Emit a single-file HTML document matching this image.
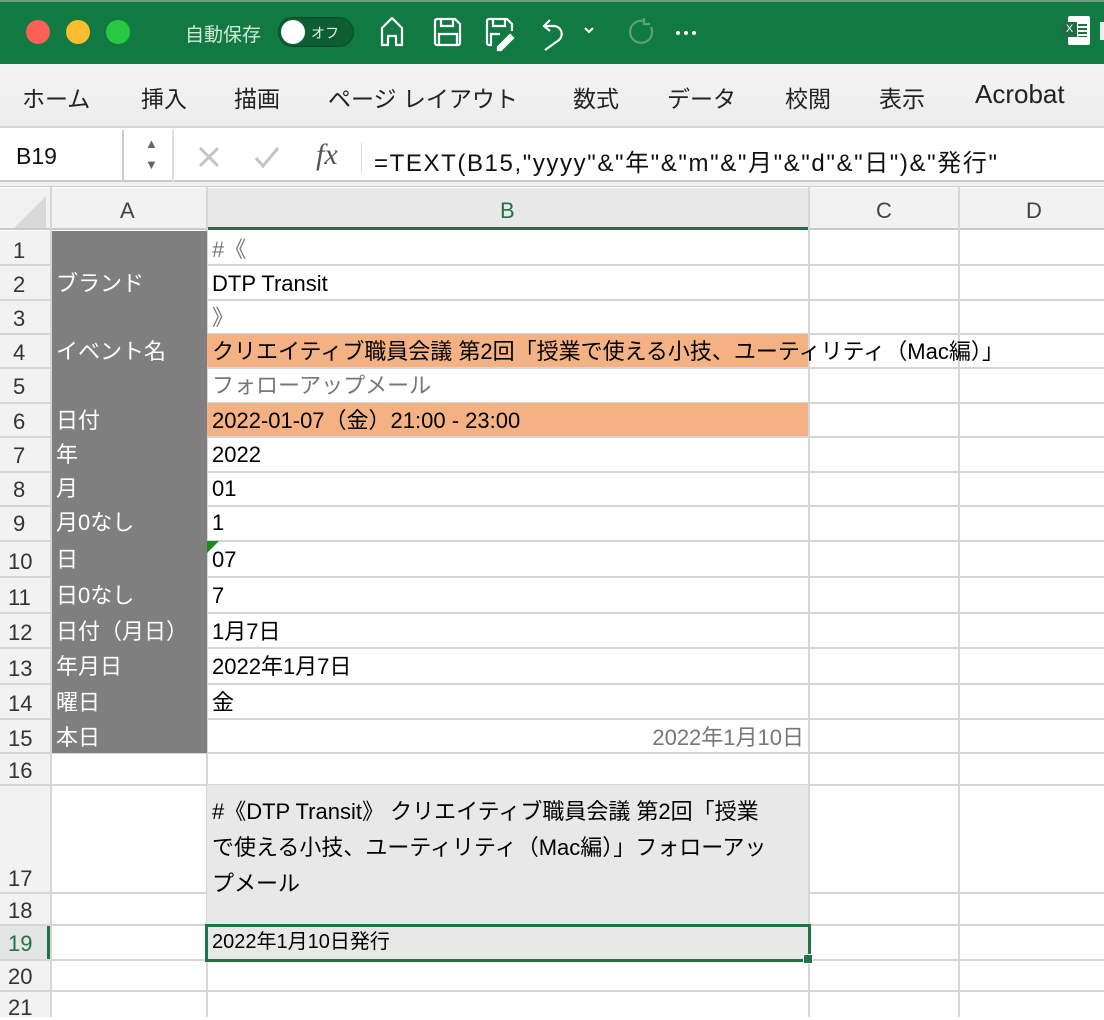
<!DOCTYPE html>
<html><head><meta charset="utf-8"><style>
*{margin:0;padding:0;box-sizing:border-box}
body{width:1104px;height:1017px;overflow:hidden;background:#fff;font-family:"Liberation Sans","Noto Sans CJK JP",sans-serif;position:relative}
.a{position:absolute}
.t{position:absolute;white-space:nowrap}
.cell{position:absolute;font-size:22px;color:#000;white-space:nowrap;line-height:1}
.hl{position:absolute;left:0;width:1104px;height:2px;background:#d6d6d6}
.vl{position:absolute;top:187px;width:2px;height:830px;background:#d6d6d6}
.rn{position:absolute;left:0;width:50px;font-size:22px;color:#333;text-align:left;padding-left:13px;line-height:1}
.tab{position:absolute;top:80px;font-size:23px;color:#222}
</style></head><body>
<div class="a" style="left:0;top:0;width:1104px;height:64px;background:#117a42;border-top:2px solid #6a9b7e"></div>
<div class="a" style="left:26px;top:20px;width:24px;height:24px;border-radius:50%;background:#fe5f57"></div>
<div class="a" style="left:66px;top:20px;width:24px;height:24px;border-radius:50%;background:#febc2e"></div>
<div class="a" style="left:106px;top:20px;width:24px;height:24px;border-radius:50%;background:#28c840"></div>
<div class="t" style="left:185px;top:20px;font-size:19px;color:#d6e8dc">自動保存</div>
<div class="a" style="left:278px;top:17px;width:76px;height:30px;border-radius:15px;background:#0d5e32;border:1px solid #0a4a27"></div>
<div class="a" style="left:281px;top:20px;width:24px;height:24px;border-radius:50%;background:#fff"></div>
<div class="t" style="left:311px;top:23px;font-size:14px;color:#e8f0ea">オフ</div>
<svg class="a" style="left:378px;top:14px" width="320" height="38" viewBox="0 0 320 38" fill="none" stroke="#fff" stroke-width="2.2">
<path d="M4 31V14L14 4l10 10v17h-6V22h-8v9z" stroke-linejoin="round"/>
<path d="M59 5h18l5 5v19a2 2 0 0 1-2 2H59a2 2 0 0 1-2-2V7a2 2 0 0 1 2-2zM63 5v7h12V5M61 31V20h18v11"/>
<path d="M114 31h-3a2 2 0 0 1-2-2V7a2 2 0 0 1 2-2h18l5 5v7M115 5v7h12V5M113 31V20h9"/>
<path d="M120 33l12-12 3 3-12 12h-3z" fill="#fff"/>
<path d="M172 6l-6 6 6 5M166 12h10a8 8 0 0 1 5 14l-14 10"/>
<path d="M207 14l4 4 4-4" stroke-width="2"/>
<path d="M265 7a11 11 0 1 0 8 6M266 4v6h6" stroke="#5fa078"/>
<circle cx="300" cy="19" r="2" fill="#fff" stroke="none"/><circle cx="308" cy="19" r="2" fill="#fff" stroke="none"/><circle cx="316" cy="19" r="2" fill="#fff" stroke="none"/>
</svg>
<div class="a" style="left:1068px;top:16px;width:22px;height:29px;background:#fff;border-radius:2px"></div>
<div class="a" style="left:1078px;top:24px;width:9px;height:13px;background:repeating-linear-gradient(#1d6f42 0 2px,#fff 2px 4px)"></div>
<div class="a" style="left:1062px;top:22px;width:15px;height:15px;background:#1d6f42;color:#fff;font-size:11px;text-align:center;line-height:15px">X</div>
<div class="a" style="left:1100px;top:22px;width:4px;height:18px;background:#eee"></div>
<div class="a" style="left:0;top:64px;width:1104px;height:64px;background:linear-gradient(#f4f4f4,#ececec);border-bottom:2px solid #d8d5d2"></div>
<div class="tab" style="left:22px">ホーム</div>
<div class="tab" style="left:141px">挿入</div>
<div class="tab" style="left:234px">描画</div>
<div class="tab" style="left:328px">ページ レイアウト</div>
<div class="tab" style="left:573px">数式</div>
<div class="tab" style="left:667px">データ</div>
<div class="tab" style="left:785px">校閲</div>
<div class="tab" style="left:879px">表示</div>
<div class="tab" style="left:975px;top:79px;font-size:26px">Acrobat</div>
<div class="a" style="left:0;top:130px;width:1104px;height:52px;background:#fff;border-bottom:2px solid #c9c9c9"></div>
<div class="a" style="left:0;top:182px;width:1104px;height:5px;background:#f0f0f0;border-bottom:1px solid #ccc"></div>
<div class="a" style="left:122px;top:130px;width:2px;height:52px;background:#ccc"></div>
<div class="a" style="left:172px;top:130px;width:2px;height:52px;background:#ddd"></div>
<div class="t" style="left:16px;top:143px;font-size:23px;color:#111">B19</div>
<div class="t" style="left:145px;top:136px;font-size:13px;color:#666">▲</div>
<div class="t" style="left:145px;top:157px;font-size:13px;color:#666">▼</div>
<svg class="a" style="left:196px;top:144px" width="90" height="28" fill="none" stroke="#c4c4c4" stroke-width="3"><path d="M4 4l18 18M22 4L4 22"/><path d="M60 14l7 8 15-18"/></svg>
<div class="t" style="left:316px;top:138px;font-size:30px;color:#555;font-family:'Liberation Serif',serif;font-style:italic">fx</div>
<div class="a" style="left:361px;top:143px;width:1px;height:30px;background:#ddd"></div>
<div class="t" style="left:374px;top:143px;font-size:24px;color:#111;letter-spacing:1.6px">=TEXT(B15,"yyyy"&amp;"年"&amp;"m"&amp;"月"&amp;"d"&amp;"日")&amp;"発行"</div>
<div class="a" style="left:0;top:188px;width:1104px;height:42px;background:#f2f2f2;border-bottom:2px solid #c9c9c9"></div>
<div class="a" style="left:207px;top:188px;width:602px;height:42px;background:#e8e8e8;border-bottom:3px solid #217346"></div>
<svg class="a" style="left:14px;top:196px" width="32" height="32"><path d="M32 0V32H0z" fill="#d9d9d9"/></svg>
<div class="t" style="left:120px;top:198px;font-size:22px;color:#444">A</div>
<div class="t" style="left:500px;top:198px;font-size:22px;color:#217346">B</div>
<div class="t" style="left:876px;top:198px;font-size:22px;color:#444">C</div>
<div class="t" style="left:1026px;top:198px;font-size:22px;color:#444">D</div>
<div class="a" style="left:0;top:231px;width:50px;height:786px;background:#f2f2f2"></div>
<div class="a" style="left:0;top:925px;width:50px;height:35px;background:#e4e4e4;border-right:3px solid #217346"></div>
<div class="hl" style="top:264px"></div><div class="hl" style="top:299px"></div><div class="hl" style="top:333px"></div>
<div class="hl" style="top:367px"></div><div class="hl" style="top:402px"></div><div class="hl" style="top:436px"></div>
<div class="hl" style="top:471px"></div><div class="hl" style="top:505px"></div><div class="hl" style="top:540px"></div>
<div class="hl" style="top:576px"></div><div class="hl" style="top:612px"></div><div class="hl" style="top:647px"></div>
<div class="hl" style="top:683px"></div><div class="hl" style="top:718px"></div><div class="hl" style="top:752px"></div>
<div class="hl" style="top:784px"></div><div class="hl" style="top:892px"></div><div class="hl" style="top:924px"></div>
<div class="hl" style="top:959px"></div><div class="hl" style="top:990px"></div>
<div class="vl" style="left:50px"></div><div class="vl" style="left:206px"></div><div class="vl" style="left:808px"></div><div class="vl" style="left:958px"></div>
<div class="a" style="left:207px;top:785px;width:601px;height:175px;background:#e8e8e8"></div>
<div class="a" style="left:52px;top:231px;width:155px;height:522px;background:#7f7f7f"></div>
<div class="a" style="left:207px;top:334px;width:601px;height:33px;background:#f4b183"></div>
<div class="a" style="left:207px;top:403px;width:601px;height:33px;background:#f4b183"></div>
<div class="rn" style="top:240px">1</div><div class="rn" style="top:274px">2</div><div class="rn" style="top:308px">3</div>
<div class="rn" style="top:342px">4</div><div class="rn" style="top:376px">5</div><div class="rn" style="top:411px">6</div>
<div class="rn" style="top:445px">7</div><div class="rn" style="top:479px">8</div><div class="rn" style="top:513px">9</div>
<div class="rn" style="top:551px;padding-left:8px">10</div><div class="rn" style="top:587px;padding-left:8px">11</div><div class="rn" style="top:622px;padding-left:8px">12</div>
<div class="rn" style="top:658px;padding-left:8px">13</div><div class="rn" style="top:693px;padding-left:8px">14</div><div class="rn" style="top:728px;padding-left:8px">15</div>
<div class="rn" style="top:760px;padding-left:8px">16</div><div class="rn" style="top:868px;padding-left:8px">17</div><div class="rn" style="top:900px;padding-left:8px">18</div>
<div class="rn" style="top:933px;color:#217346;padding-left:8px">19</div><div class="rn" style="top:966px;padding-left:8px">20</div><div class="rn" style="top:997px;padding-left:8px">21</div>
<div class="cell" style="left:56px;top:273px;color:#fff">ブランド</div>
<div class="cell" style="left:56px;top:341px;color:#fff">イベント名</div>
<div class="cell" style="left:56px;top:410px;color:#fff">日付</div>
<div class="cell" style="left:56px;top:444px;color:#fff">年</div>
<div class="cell" style="left:56px;top:478px;color:#fff">月</div>
<div class="cell" style="left:56px;top:512px;color:#fff">月0なし</div>
<div class="cell" style="left:56px;top:549px;color:#fff">日</div>
<div class="cell" style="left:56px;top:585px;color:#fff">日0なし</div>
<div class="cell" style="left:56px;top:621px;color:#fff">日付（月日）</div>
<div class="cell" style="left:56px;top:656px;color:#fff">年月日</div>
<div class="cell" style="left:56px;top:692px;color:#fff">曜日</div>
<div class="cell" style="left:56px;top:727px;color:#fff">本日</div>
<div class="cell" style="left:212px;top:239px;color:#777">#《</div>
<div class="cell" style="left:212px;top:273px">DTP Transit</div>
<div class="cell" style="left:212px;top:307px;color:#777">》</div>
<div class="cell" style="left:212px;top:341px">クリエイティブ職員会議 第2回「授業で使える小技、ユーティリティ（Mac編）」</div>
<div class="cell" style="left:212px;top:375px;color:#777">フォローアップメール</div>
<div class="cell" style="left:212px;top:410px">2022-01-07（金）21:00 - 23:00</div>
<div class="cell" style="left:212px;top:444px">2022</div>
<div class="cell" style="left:212px;top:478px">01</div>
<div class="cell" style="left:212px;top:512px">1</div>
<svg class="a" style="left:207px;top:541px" width="12" height="12"><path d="M0 0H12L0 12z" fill="#1e8a1e"/></svg>
<div class="cell" style="left:212px;top:549px">07</div>
<div class="cell" style="left:212px;top:585px">7</div>
<div class="cell" style="left:212px;top:621px">1月7日</div>
<div class="cell" style="left:212px;top:656px">2022年1月7日</div>
<div class="cell" style="left:212px;top:692px">金</div>
<div class="cell" style="right:300px;top:727px;color:#777">2022年1月10日</div>
<div class="cell" style="left:212px;top:794px;line-height:36px">#《DTP Transit》 クリエイティブ職員会議 第2回「授業<br>で使える小技、ユーティリティ（Mac編）」フォローアッ<br>プメール</div>
<div class="a" style="left:205px;top:924px;width:606px;height:38px;border:3px solid #217346"></div>
<div class="a" style="left:803px;top:954px;width:10px;height:10px;background:#217346;border:1px solid #fff"></div>
<div class="cell" style="left:212px;top:932px;font-size:20px">2022年1月10日発行</div>
</body></html>
